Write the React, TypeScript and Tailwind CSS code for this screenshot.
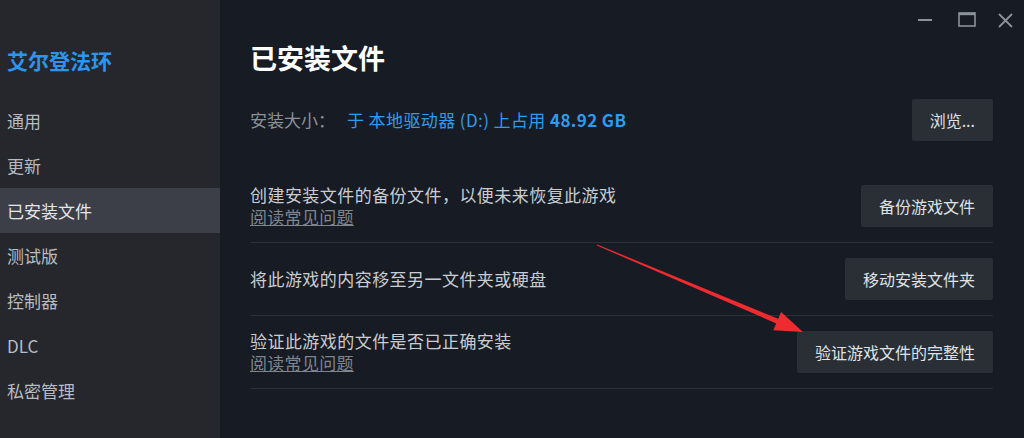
import React from "react";

const FONT = { fontFamily: '"Noto Sans CJK SC", "Noto Sans", sans-serif' };

const NAV_ITEMS = ["通用", "更新", "已安装文件", "测试版", "控制器", "DLC", "私密管理"];

// window controls, top right
const WindowControls: React.FC = () => (
  <div className="absolute top-0 right-0">
    <svg width="120" height="40" viewBox="904 0 120 40">
      <line x1="918" y1="20" x2="932" y2="20" stroke="#8b929a" strokeWidth="2" />
      <rect x="959" y="13" width="16" height="13" fill="none" stroke="#8b929a" strokeWidth="1.6" />
      <line x1="959" y1="14" x2="975" y2="14" stroke="#8b929a" strokeWidth="2.4" />
      <path d="M999 14 L1012 27 M1012 14 L999 27" stroke="#8b929a" strokeWidth="1.8" />
    </svg>
  </div>
);

const ActionButton: React.FC<{ label: string }> = ({ label }) => (
  <button className="h-[42px] px-[18px] bg-[#2a2e35] text-[#dfe3e6] text-[16px] rounded-[2px] whitespace-nowrap shrink-0">
    {label}
  </button>
);

const Row: React.FC<{ text: string; link?: boolean; button: string }> = ({
  text,
  link,
  button,
}) => (
  <div className="flex items-center justify-between py-[14px] border-b border-[#2c3039]">
    <div className="flex flex-col justify-center min-h-[44px]">
      <p className="text-[17px] leading-[22px] tracking-[0.45px] text-[#c9cdd2]">{text}</p>
      {link && (
        <p className="text-[17px] leading-[22px] tracking-[0.3px] text-[#7f858d] underline underline-offset-1">
          阅读常见问题
        </p>
      )}
    </div>
    <ActionButton label={button} />
  </div>
);

const App: React.FC = () => {
  return (
    <div
      className="relative flex w-full h-[438px] overflow-hidden bg-[#171b24]"
      style={FONT}
    >
      {/* Sidebar */}
      <div className="w-[220px] shrink-0 bg-[#25272d] pt-[46px]">
        <div className="pl-[7px] text-[21px] leading-[28px] font-bold text-[#2b95ef]">
          艾尔登法环
        </div>
        <div className="mt-[24px] flex flex-col">
          {NAV_ITEMS.map((item) => (
            <div
              key={item}
              className={`h-[45px] flex items-center pl-[7px] text-[17px] ${
                item === "已安装文件"
                  ? "bg-[#3c3f48] text-[#e4e6e9]"
                  : "text-[#b8bcc2]"
              }`}
            >
              {item}
            </div>
          ))}
        </div>
      </div>

      {/* Main */}
      <div className="flex-1 pl-[30px] pr-[31px] pt-[40px]">
        <div className="text-[27px] leading-[36px] font-bold text-white">
          已安装文件
        </div>

        <div className="mt-[23px] flex items-center justify-between">
          <div className="flex items-center text-[17px]">
            <span className="text-[#8b929a]">安装大小：</span>
            <span className="ml-[12px] text-[#2f9bf0] tracking-[0.4px]">
              于 本地驱动器 (D:) 上占用 <span className="font-semibold">48.92 GB</span>
            </span>
          </div>
          <ActionButton label="浏览..." />
        </div>

        <div className="mt-[29px]">
          <Row text="创建安装文件的备份文件，以便未来恢复此游戏" link button="备份游戏文件" />
          <Row text="将此游戏的内容移至另一文件夹或硬盘" button="移动安装文件夹" />
          <Row text="验证此游戏的文件是否已正确安装" link button="验证游戏文件的完整性" />
        </div>
      </div>

      <WindowControls />

      {/* red arrow annotation */}
      <svg
        className="absolute inset-0 pointer-events-none"
        width="1024"
        height="438"
        viewBox="0 0 1024 438"
      >
        <polygon
          points="597.2,244.5 778.2,318.8 781.1,311.9 803,332 773.3,330.3 776.2,323.4 596.8,245.5"
          fill="#ee2b2f"
        />
      </svg>
    </div>
  );
};

export default App;
